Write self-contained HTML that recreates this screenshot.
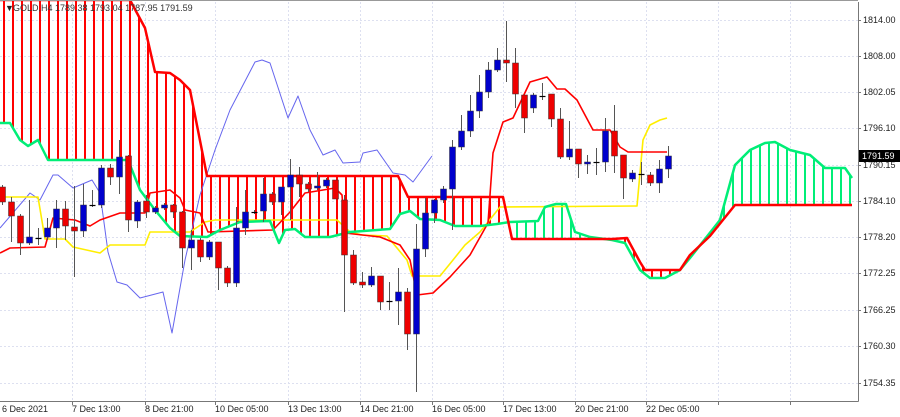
<!DOCTYPE html>
<html><head><meta charset="utf-8"><style>
body{margin:0;background:#fff;width:900px;height:417px;overflow:hidden;font-family:"Liberation Sans",sans-serif}
svg{position:absolute;left:0;top:0}
text{font-family:"Liberation Sans",sans-serif;font-size:9px;fill:#222}
</style></head><body>
<svg id="s" width="900" height="417" xmlns="http://www.w3.org/2000/svg">
<g id="grid" stroke="#dde0f0" stroke-width="1" stroke-dasharray="2,2"></g>
<g id="hatch"></g>
<g id="lines" fill="none" stroke-linejoin="round"></g>
<g id="candles"></g>
<line x1="858.5" y1="2" x2="858.5" y2="401.5" stroke="#777"/>
<line x1="0" y1="401.5" x2="858.5" y2="401.5" stroke="#777"/>
<line x1="0" y1="0.5" x2="858" y2="0.5" stroke="#999"/>
<g id="axis"></g>
<text x="5" y="11">▼</text>
<text x="13" y="11" style="fill:#333">GOLD,H4  1789.38 1793.04 1787.95 1791.59</text>
<rect x="859" y="150" width="41" height="12" fill="#000"/>
<text x="862" y="159" style="fill:#fff">1791.59</text>
<g font-size="9">
<text x="2" y="412">6 Dec 2021</text>
<text x="72" y="412">7 Dec 13:00</text>
<text x="145" y="412">8 Dec 21:00</text>
<text x="215" y="412">10 Dec 05:00</text>
<text x="288" y="412">13 Dec 13:00</text>
<text x="360" y="412">14 Dec 21:00</text>
<text x="432" y="412">16 Dec 05:00</text>
<text x="503" y="412">17 Dec 13:00</text>
<text x="575" y="412">20 Dec 21:00</text>
<text x="646" y="412">22 Dec 05:00</text>
</g>
</svg>
<script>
const NS="http://www.w3.org/2000/svg";
function el(p,t,a){const e=document.createElementNS(NS,t);for(const k in a)e.setAttribute(k,a[k]);document.getElementById(p).appendChild(e);return e;}
// grid
const py=[[20,"1814.00"],[56,"1808.00"],[92,"1802.05"],[128,"1796.10"],[165,"1790.15"],[201,"1784.10"],[237,"1778.20"],[273,"1772.25"],[310,"1766.25"],[346,"1760.30"],[383,"1754.35"]];
py.forEach(([y,l])=>{el("grid","line",{x1:0,y1:y+.5,x2:858,y2:y+.5});el("axis","line",{x1:858,y1:y+.5,x2:861,y2:y+.5,stroke:"#777"});const t=el("axis","text",{x:863,y:y+3});t.textContent=l;});
[72,145,215,288,360,432,503,575,646,718,790].forEach(x=>{el("grid","line",{x1:x+.5,y1:2,x2:x+.5,y2:401});el("axis","line",{x1:x+.5,y1:401,x2:x+.5,y2:405,stroke:"#777"});});
const A=[[0,123],[10,123],[20,140],[28,146],[38,140],[48,160],[128,160],[140,190],[155,210],[170,228],[180,236],[207,237],[220,230],[240,222],[270,221],[279,243],[285,230],[295,229],[305,237],[330,237],[350,232],[390,229],[400,214],[410,211],[420,219],[440,220],[455,226],[480,226],[497,224],[510,222],[538,221],[545,207],[556,204],[566,204],[575,232],[590,237],[612,240],[625,243],[640,270],[650,278],[665,278],[680,270],[690,258],[720,220],[735,165],[750,150],[765,143],[775,142],[790,150],[810,155],[825,168],[845,168],[852,178]];
const B=[[0,0],[130,0],[145,28],[155,72],[170,73],[180,80],[190,90],[207,176],[398,176],[408,197],[503,197],[512,239],[612,239],[627,238],[640,262],[645,270],[680,270],[690,255],[710,236],[735,205],[852,205]];
function interp(P,x){for(let i=1;i<P.length;i++){if(x<=P[i][0]){const a=P[i-1],b=P[i];return a[1]+(b[1]-a[1])*(x-a[0])/(b[0]-a[0]||1);}}return P[P.length-1][1];}
for(let x=4;x<=852;x+=9){const ya=interp(A,x),yb=interp(B,x);const c=yb<ya?"#ff0000":"#00ee77";el("hatch","line",{x1:x,y1:Math.min(ya,yb),x2:x,y2:Math.max(ya,yb),stroke:c,"stroke-width":2});}
function pl(P,c,w){el("lines","polyline",{points:P.map(p=>p.join(",")).join(" "),stroke:c,"stroke-width":w});}
pl([[0,228],[30,193],[40,200],[53,175],[58,175],[73,188],[92,180],[100,193],[108,252],[117,282],[127,285],[140,298],[163,292],[172,333],[185,260],[200,195],[215,150],[230,110],[255,62],[262,60],[270,63],[288,118],[298,96],[310,130],[323,155],[335,150],[343,163],[360,162],[363,153],[377,150],[393,173],[405,175],[413,182],[432,156]],"#6666ee",1);
pl([[0,197],[38,197],[45,239],[65,239],[73,247],[100,253],[110,245],[145,245],[150,232],[190,232],[205,222],[215,220],[337,220],[350,232],[362,235],[387,236],[407,260],[412,276],[440,276],[453,260],[465,245],[480,232],[500,207],[637,206],[643,140],[650,125],[660,120],[667,118]],"#ffee00",1.6);
pl([[0,253],[10,248],[45,247],[53,218],[75,220],[90,226],[100,220],[120,213],[145,213],[150,193],[170,190],[180,198],[185,210],[200,213],[208,232],[273,230],[290,212],[305,193],[335,188],[342,195],[345,233],[380,237],[400,245],[410,260],[417,295],[433,293],[450,277],[470,255],[488,223],[493,153],[503,122],[513,118],[530,82],[547,77],[557,89],[565,89],[577,100],[593,130],[610,130],[620,147],[628,152],[667,152]],"#ff0000",1.6);
pl(A,"#00ee77",2.5);pl(B,"#ff0000",2.5);
// candles: k, open, close, high, low (pixel y)
const C=[[0,187,202,185,205],[1,202,216,197,242],[2,216,243,214,255],[3,243,237,200,245],[4,238,238,228,245],[5,237,228,218,240],[6,228,209,200,248],[7,209,226,201,240],[8,227,231,186,277],[9,231,205,184,237],[10,205,205,190,207],[11,205,168,165,208],[12,168,177,164,185],[13,177,157,140,194],[14,156,220,155,232],[15,221,202,200,228],[16,201,212,195,218],[17,212,208,206,214],[18,208,205,203,210],[19,205,212,204,218],[20,212,248,211,268],[21,248,240,230,270],[22,240,257,238,262],[23,257,242,240,260],[24,242,268,242,290],[25,268,283,266,287],[26,283,228,207,287],[27,228,212,190,235],[28,212,212,210,214],[29,211,194,178,222],[30,194,202,192,205],[31,202,187,187,215],[32,187,175,159,220],[33,175,184,167,197],[34,184,189,182,192],[35,188,186,172,190],[36,186,180,178,188],[37,180,199,180,199],[38,200,255,195,312],[39,255,283,250,285],[40,282,285,272,288],[41,285,276,267,287],[42,276,302,276,310],[43,301,301,282,310],[44,301,292,268,325],[45,292,334,288,350],[46,334,249,224,392],[47,249,213,198,257],[48,213,200,199,223],[49,200,189,186,203],[50,189,147,140,230],[51,147,131,115,150],[52,131,111,95,137],[53,111,92,75,118],[54,92,70,62,98],[55,70,60,48,72],[56,60,63,21,82],[57,63,94,48,108],[58,95,118,95,133],[59,108,95,93,113],[60,96,96,83,100],[61,94,119,94,127],[62,119,157,108,159],[63,157,149,121,160],[64,149,164,149,178],[65,164,162,155,174],[66,162,162,148,175],[67,162,131,118,172],[68,131,156,105,173],[69,155,178,155,199],[70,179,173,170,182],[71,174,174,162,185],[72,175,183,172,186],[73,183,169,160,193],[74,169,156,146,178]];
C.forEach(([k,o,c,h,l])=>{const x=2+9*k+.5;const up=c<o;const col=up?"#0000cc":"#ee0000";
el("candles","line",{x1:x,y1:h,x2:x,y2:l,stroke:"#555","stroke-width":1});
const t=Math.min(o,c),b=Math.max(o,c);
if(b-t<1.5)el("candles","line",{x1:x-3,y1:t+.5,x2:x+3,y2:t+.5,stroke:"#000","stroke-width":1.2});
else el("candles","rect",{x:x-3,y:t,width:6,height:b-t,fill:col,stroke:"#333","stroke-width":.5});});
</script>
</body></html>
